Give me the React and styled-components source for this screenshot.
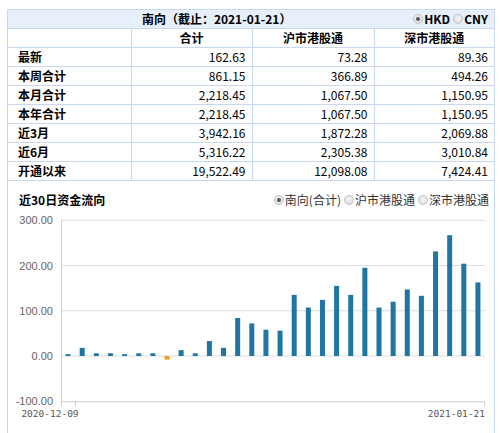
import React from 'react';
import styled, { createGlobalStyle } from 'styled-components';

const GlobalStyle = createGlobalStyle`
  body {
    margin: 0;
    background: #fff;
    font-family: "Noto Sans CJK SC", "Noto Sans", sans-serif;
    font-size: 12px;
    color: #000;
  }
`;

const LINE = '#c8d8f0';

const rows = [
  ['最新', '162.63', '73.28', '89.36'],
  ['本周合计', '861.15', '366.89', '494.26'],
  ['本月合计', '2,218.45', '1,067.50', '1,150.95'],
  ['本年合计', '2,218.45', '1,067.50', '1,150.95'],
  ['近3月', '3,942.16', '1,872.28', '2,069.88'],
  ['近6月', '5,316.22', '2,305.38', '3,010.84'],
  ['开通以来', '19,522.49', '12,098.08', '7,424.41'],
];

const flows = [
  4, 18, 6, 6, 4, 6, 6, -8, 13, 6, 33, 18, 84, 72, 58, 56, 135, 107, 124,
  155, 135, 195, 107, 120, 147, 133, 231, 267, 204, 162.63,
];

const Radio = ({ checked, children, bold }) => (
  <RadioLabel $bold={bold}>
    <Dot $checked={checked} />
    {children}
  </RadioLabel>
);

const FlowChart = () => {
  const left = 61;
  const right = 485;
  const zero = 355;
  const k = 0.4525;
  const step = (right - left) / flows.length;
  const y = v => zero - v * k;
  const ticks = [300, 200, 100, 0, -100];

  return (
    <svg width='486' height='230' viewBox='8 208 486 230'>
      {ticks.map(t => (
        <g key={t}>
          {t > -100 && (
            <line x1={left} x2={right} y1={y(t)} y2={y(t)} stroke='#dcdcdc' />
          )}
          <text
            x='53'
            y={y(t) + 4}
            textAnchor='end'
            fontSize='11'
            fill='#666'
            fontFamily='Liberation Sans, Arial, sans-serif'
          >
            {t.toFixed(2)}
          </text>
        </g>
      ))}
      <line x1={left + 0.5} x2={left + 0.5} y1={y(300)} y2={y(-100) + 5} stroke='#c8d0dc' />
      <line x1={left} x2={right} y1={y(-100) + 0.5} y2={y(-100) + 0.5} stroke='#c8d0dc' />
      <line x1='75.5' x2='75.5' y1={y(-100)} y2={y(-100) + 5} stroke='#c8d0dc' />
      <line x1={right - 0.5} x2={right - 0.5} y1={y(-100)} y2={y(-100) + 5} stroke='#c8d0dc' />
      {flows.map((v, i) => {
        const cx = left + (i + 0.5) * step;
        const top = v >= 0 ? y(v) : zero;
        return (
          <rect
            key={i}
            x={cx - 2.5}
            y={top}
            width='5'
            height={Math.abs(v) * k}
            fill={v >= 0 ? '#1f76a3' : '#f29b26'}
          />
        );
      })}
      <text
        x='50'
        y='416'
        textAnchor='middle'
        fontSize='9.5'
        fill='#555'
        fontFamily='DejaVu Sans Mono, monospace'
      >
        2020-12-09
      </text>
      <text
        x='485'
        y='416'
        textAnchor='end'
        fontSize='9.5'
        fill='#555'
        fontFamily='DejaVu Sans Mono, monospace'
      >
        2021-01-21
      </text>
    </svg>
  );
};

const App = () => (
  <>
    <GlobalStyle />
    <Panel>
      <Table>
        <colgroup>
          <col style={{ width: 123 }} />
          <col style={{ width: 121 }} />
          <col style={{ width: 122 }} />
          <col />
        </colgroup>
        <thead>
          <tr>
            <TitleCell colSpan={4}>
              <TitleBar>
                <Title>南向（截止：2021-01-21）</Title>
                <RadioGroup>
                  <Radio checked bold>HKD</Radio>
                  <Radio bold>CNY</Radio>
                </RadioGroup>
              </TitleBar>
            </TitleCell>
          </tr>
          <tr>
            <Head />
            <Head>合计</Head>
            <Head>沪市港股通</Head>
            <Head>深市港股通</Head>
          </tr>
        </thead>
        <tbody>
          {rows.map(([label, ...nums]) => (
            <tr key={label}>
              <Label>{label}</Label>
              {nums.map((n, i) => (
                <Num key={i}>{n}</Num>
              ))}
            </tr>
          ))}
        </tbody>
      </Table>
      <ChartSection>
        <ChartHeader>
          <ChartTitle>近30日资金流向</ChartTitle>
          <RadioGroup>
            <Radio checked>南向(合计)</Radio>
            <Radio>沪市港股通</Radio>
            <Radio>深市港股通</Radio>
          </RadioGroup>
        </ChartHeader>
        <FlowChart />
      </ChartSection>
    </Panel>
  </>
);

const Panel = styled.div`
  margin: 9px 0 0 7px;
  width: 486px;
  min-height: 440px;
  border: 1px solid ${LINE};
  border-bottom: none;
`;

const Table = styled.table`
  width: 100%;
  border-collapse: collapse;
  table-layout: fixed;
  border-style: hidden;
  border-bottom: 1px solid ${LINE};

  td,
  th {
    border: 1px solid ${LINE};
    height: 18px;
    padding: 0;
    line-height: 18px;
    box-sizing: border-box;
  }
`;

const TitleCell = styled.th`
  background: #e7effb;
  font-weight: 700;
`;

const TitleBar = styled.div`
  display: flex;
  align-items: center;
  padding-right: 6px;
`;

const Title = styled.div`
  flex: 1;
  text-align: center;
  padding-left: 12px;
`;

const Head = styled.th`
  font-weight: 700;
  text-align: center;
`;

const Label = styled.td`
  font-weight: 700;
  padding-left: 10px !important;
`;

const Num = styled.td`
  text-align: right;
  padding-right: 6px !important;
`;

const RadioGroup = styled.div`
  display: flex;
  align-items: center;
  gap: 3px;
`;

const RadioLabel = styled.label`
  display: flex;
  align-items: center;
  gap: 1px;
  font-weight: ${p => (p.$bold ? 700 : 400)};
  color: ${p => (p.$bold ? '#000' : '#333')};
`;

const Dot = styled.span`
  position: relative;
  width: 10px;
  height: 10px;
  border-radius: 50%;
  box-sizing: border-box;
  border: 1px solid #c4c4c4;
  background: radial-gradient(circle at 50% 40%, #f6f6f6, #d6d6d6);

  &::after {
    content: '';
    display: ${p => (p.$checked ? 'block' : 'none')};
    position: absolute;
    left: 2px;
    top: 2px;
    width: 4px;
    height: 4px;
    border-radius: 50%;
    background: #555;
  }
`;

const ChartSection = styled.div`
  padding-top: 9px;
`;

const ChartHeader = styled.div`
  display: flex;
  align-items: center;
  justify-content: space-between;
  height: 19px;
  padding: 0 5px 0 11px;
`;

const ChartTitle = styled.div`
  font-weight: 700;
`;

export default App;
